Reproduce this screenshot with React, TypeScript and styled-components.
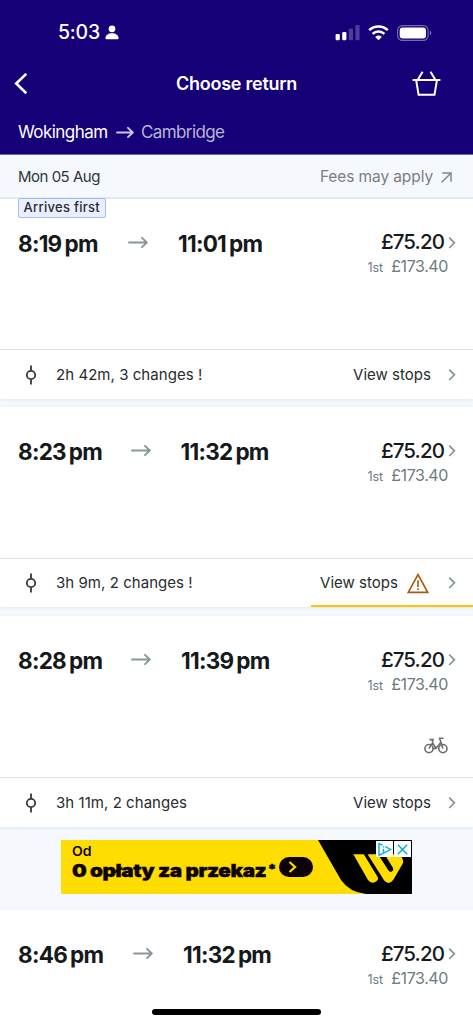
import React from "react";
import styled, { createGlobalStyle } from "styled-components";

const Global = createGlobalStyle`
  *, *::before, *::after { box-sizing: border-box; }
  body { margin: 0; background: #f5f9fd; font-family: Inter, "Liberation Sans", sans-serif; color: #15191b; }
  svg { display: block; flex: none; }
`;

const Screen = styled.main`
  width: 473px;
  height: 1024px;
  overflow: hidden;
  position: relative;
  background: #f5f9fd;
`;

/* Fixed-width run of text, so neighbouring parts keep their place */
const Label = styled.span<{ $w?: number; $size: number; $weight?: number; $track?: number; $color?: string }>`
  display: block;
  flex: none;
  white-space: pre;
  width: ${(p) => (p.$w ? `${p.$w}px` : "auto")};
  font-size: ${(p) => p.$size}px;
  font-weight: ${(p) => p.$weight ?? 400};
  letter-spacing: ${(p) => p.$track ?? 0}px;
  color: ${(p) => p.$color ?? "inherit"};
  line-height: 1.2;
`;

const Header = styled.header`
  height: 154px;
  background: #160078;
  color: #fff;
  display: flex;
  flex-direction: column;
`;

const StatusBar = styled.div`
  height: 56px;
  padding: 9px 41px 0 58px;
  display: flex;
  align-items: center;
`;

const StatusIcons = styled.div`
  display: flex;
  align-items: center;
  margin-left: auto;
  gap: 8px;
`;

const NavBar = styled.div`
  height: 55px;
  padding: 0 32px 0 14px;
  display: grid;
  grid-template-columns: 162px 1fr auto;
  align-items: center;
`;

const RouteBar = styled.div`
  height: 43px;
  padding: 0 18px;
  display: flex;
  align-items: center;
  gap: 7px;
`;

const DateBar = styled.div`
  height: 45px;
  padding: 2px 21px 0 18px;
  border-top: 1px solid #7163ad;
  border-bottom: 2px solid #e7ebee;
  display: flex;
  align-items: center;
  justify-content: space-between;
`;

const Fees = styled.div`
  display: flex;
  align-items: center;
  gap: 8px;
`;

const Card = styled.article<{ $gap?: number }>`
  background: #fff;
  margin-bottom: ${(p) => p.$gap ?? 0}px;
  box-shadow: 0 1px 3px rgba(40, 60, 70, 0.09);
`;

const Journey = styled.div<{ $h: number }>`
  height: ${(p) => p.$h}px;
  padding: 30px 17px 0 18px;
  display: flex;
  justify-content: space-between;
  position: relative;
`;

const Times = styled.div`
  display: flex;
  align-items: center;
  height: 28px;
  gap: 30px;
`;

const Prices = styled.div`
  display: flex;
  flex-direction: column;
  align-items: flex-end;
`;

const PriceRow = styled.div<{ $h: number }>`
  display: flex;
  align-items: center;
  height: ${(p) => p.$h}px;
  gap: 4px;
`;

const FirstClass = styled.div`
  display: flex;
  align-items: baseline;
  gap: 8px;
  padding: 1px 8px 0 0;
`;

const BikeSlot = styled.div`
  position: absolute;
  right: 25px;
  bottom: 23px;
`;

const Badge = styled.span`
  position: absolute;
  left: 17.5px;
  top: -1px;
  width: 88px;
  height: 20px;
  border: 1px solid #a4bdfa;
  border-radius: 2px;
  background: #ebeffd;
  padding: 0 0 0 5px;
  display: flex;
  align-items: center;
`;

const Footer = styled.div<{ $h: number }>`
  height: ${(p) => p.$h}px;
  border-top: 1px solid #dfe2e3;
  padding: 0 17px 0 25px;
  display: flex;
  align-items: center;
  position: relative;
`;

const Stops = styled.div`
  display: flex;
  align-items: center;
  margin-left: auto;
`;

const IconGap = styled.div<{ $l: number; $r: number }>`
  padding: 0 ${(p) => p.$r}px 0 ${(p) => p.$l}px;
`;

const WarningLine = styled.div`
  position: absolute;
  right: 0;
  bottom: 0;
  width: 162px;
  height: 2px;
  background: #ffc20d;
`;

const AdSlot = styled.aside`
  height: 83px;
  padding: 13px 0 0 61px;
`;

const Banner = styled.div`
  width: 351px;
  height: 54px;
  background: #ffdd00;
  display: flex;
  position: relative;
`;

const AdCopy = styled.div`
  width: 218px;
  padding: 4px 0 0 11px;
  color: #0d0208;
`;

/* Extended, extra-heavy cut for the advert's headline */
const Wide = styled.div<{ $x: number; $stroke?: number }>`
  width: max-content;
  transform: scaleX(${(p) => p.$x});
  transform-origin: left center;
  -webkit-text-stroke: ${(p) => p.$stroke ?? 0}px currentColor;
`;

const Asterisk = styled.span`
  font-size: 13px;
  line-height: 0;
  vertical-align: 3px;
  margin-left: 1px;
`;

const AdButton = styled.div`
  width: 34px;
  height: 20px;
  margin-top: 17px;
  border-radius: 10px;
  background: #0d0208;
  display: flex;
  align-items: center;
  padding-left: 9px;
`;

const AdArt = styled.div`
  position: absolute;
  right: 0;
  top: 0;
`;

const AdControls = styled.div`
  position: absolute;
  right: 1px;
  top: 1px;
  display: flex;
  gap: 1px;
`;

const AdControl = styled.div`
  width: 17px;
  height: 16px;
  background: #fff;
  display: grid;
  place-items: center;
`;

const HomeIndicator = styled.div`
  position: absolute;
  left: 152px;
  bottom: 9px;
  width: 169px;
  height: 6px;
  border-radius: 3px;
  background: #000;
`;

const Arrow = ({ w = 20, color = "#89979c" }: { w?: number; color?: string }) => (
  <svg width={w} height="12" viewBox={`0 0 ${w} 12`} fill="none" stroke={color} strokeWidth="1.9" strokeLinecap="round" strokeLinejoin="round">
    <path d={`M1 5.5H${w - 1.5}M${w - 6} .9L${w - 1.2} 5.5L${w - 6} 10.1`} />
  </svg>
);

const Chevron = () => (
  <svg width="8" height="12" viewBox="0 0 8 12" fill="none" stroke="#849397" strokeWidth="1.7">
    <path d="M1.2 .6L6.4 5.8L1.2 11" />
  </svg>
);

const Person = () => (
  <svg width="14" height="15" viewBox="0 0 14 15" fill="#fff">
    <circle cx="7" cy="3.8" r="3.4" />
    <path d="M.4 13.2C.4 10.2 3.2 8.2 7 8.2s6.6 2 6.6 5q0 1.1-1.1 1.1h-11Q.4 14.3.4 13.2Z" />
  </svg>
);

const Signal = () => (
  <svg width="25" height="16" viewBox="0 0 25 16" fill="#fff">
    <rect x=".6" y="9" width="4.2" height="6.2" rx="1.2" />
    <rect x="7.2" y="7" width="4.2" height="8.2" rx="1.2" />
    <rect x="13.8" y="3.4" width="4.2" height="11.8" rx="1.2" opacity=".24" />
    <rect x="20.4" y="0" width="4.2" height="15.2" rx="1.2" opacity=".24" />
  </svg>
);

const Wifi = () => (
  <svg width="21" height="16" viewBox="0 0 21 16" fill="none" stroke="#fff" strokeWidth="2.5">
    <path d="M1.2 5.2C6.4.1 14.6.1 19.8 5.2M4.6 8.9C7.9 5.7 13.1 5.7 16.4 8.9" />
    <path d="M10.5 15.3L7.2 11.9Q10.5 9.3 13.8 11.9Z" fill="#fff" stroke="none" />
  </svg>
);

const Battery = () => (
  <svg width="35" height="16" viewBox="0 0 35 16" fill="none">
    <rect x=".6" y=".6" width="30.5" height="14.8" rx="4.8" stroke="#7468b0" strokeWidth="1.1" />
    <rect x="2.7" y="2.6" width="26.3" height="10.8" rx="3" fill="#fff" />
    <path d="M32.8 5.4Q34.4 6.1 34.4 8T32.8 10.6Z" fill="#7468b0" />
  </svg>
);

const Back = () => (
  <svg width="14" height="22" viewBox="0 0 14 22" fill="none" stroke="#fff" strokeWidth="2.6">
    <path d="M12.3 .8L2.2 10.5L12.3 20.2" />
  </svg>
);

const Basket = () => (
  <svg width="29" height="26" viewBox="0 0 29 26" fill="none" stroke="#fff" strokeWidth="2">
    <path d="M.6 9H28.4M4.2 9.3L6.6 23.8H22.5L24.9 9.3M5.8 8.8L10.6 .7M23.3 8.8L18.5 .7" />
  </svg>
);

const External = () => (
  <svg width="11" height="11" viewBox="0 0 11 11" fill="none" stroke="#7e8b8e" strokeWidth="1.5">
    <path d="M.7 10.3L9.8 1.2M1.2 1H10V9.8" />
  </svg>
);

const StopIcon = () => (
  <svg width="12" height="20" viewBox="0 0 12 20" fill="none" stroke="#34393b" strokeWidth="1.8">
    <circle cx="6" cy="10" r="4.2" />
    <path d="M6 .5V5.8M6 14.2V19.5" />
  </svg>
);

const Warning = () => (
  <svg width="22" height="21" viewBox="0 0 22 21" fill="none" stroke="#a55c12" strokeWidth="1.6">
    <path d="M11 1.5L20.7 19.4H1.3ZM11 7.2V14M11 15.3V16.9" />
  </svg>
);

const Bike = () => (
  <svg width="24" height="17" viewBox="0 0 24 17" fill="none" stroke="#6c6f70" strokeWidth="1.6">
    <circle cx="5" cy="11.6" r="4.1" />
    <circle cx="18.9" cy="11.6" r="4.1" />
    <path d="M5.4 2.6H9.8M5 11.6L8.6 6M8.6 2.6V6L12.2 11.2L16.9 5.2M8.4 11.4H12.2M18.9 11.6L15.6 1.2H19.6" />
  </svg>
);

const UnionMark = () => (
  <svg width="94" height="54" viewBox="0 0 94 54">
    <path d="M0 0H94V54H48Q31 52 23 40Z" fill="#000" />
    <path d="M35.3 14.3H45.8L59.8 37.2Q61 39.5 59 40.8Q53.8 45 50 40Z" fill="#fd0" />
    <path d="M49.6 14.3H60L70.5 30.5Q72.3 32.6 74.2 31.2Q76 29.6 74.8 27.4L66.6 14.3H82L84.8 19.5Q85.8 21.7 84.5 24L75.2 40Q71 45.5 66.2 40.5Z" fill="#fd0" />
  </svg>
);

const AdInfo = () => (
  <svg width="15" height="15" viewBox="0 0 15 15" fill="none" stroke="#00aecd" strokeWidth="1.4">
    <path d="M5.6 3.1L2 1.6V13.4L13.6 7.5L8.2 4.5M6.5 6.8V10.6M6.5 4.2V5.5" />
  </svg>
);

const AdClose = () => (
  <svg width="11" height="11" viewBox="0 0 11 11" fill="none" stroke="#00aecd" strokeWidth="1.4">
    <path d="M.8.8L10.2 10.2M10.2.8L.8 10.2" />
  </svg>
);

type Time = { text: string; w: number };
type TripProps = {
  dep: Time;
  arr: Time;
  height: number;
  gap?: number;
  footer?: number;
  badge?: string;
  bike?: boolean;
  duration?: string;
  warning?: boolean;
};

const Clock = ({ time }: { time: Time }) => {
  const [t, suffix] = time.text.split(" ");
  return (
    <Label $size={22.5} $weight={700} $track={-0.75} $w={time.w}>
      {t}
      {"\u2006"}
      {suffix}
    </Label>
  );
};

const Trip = ({ dep, arr, height, gap, footer = 49, badge, bike, duration, warning }: TripProps) => (
  <Card $gap={gap}>
    <Journey $h={height}>
      {badge && (
        <Badge>
          <Label $size={13} $weight={500} $track={0.28} $color="#262b34">{badge}</Label>
        </Badge>
      )}
      <Times>
        <Clock time={dep} />
        <Arrow />
        <Clock time={arr} />
      </Times>
      <Prices>
        <PriceRow $h={badge ? 27 : 28}>
          <Label $size={20.5} $weight={500} $track={-0.9}>£75.20</Label>
          <Chevron />
        </PriceRow>
        <FirstClass>
          <Label $size={12.5} $color="#6c7b80">1st</Label>
          <Label $size={16} $color="#6c7b80" $track={-0.4}>£173.40</Label>
        </FirstClass>
      </Prices>
      {bike && <BikeSlot><Bike /></BikeSlot>}
    </Journey>
    {duration && (
      <Footer $h={footer}>
        <StopIcon />
        <IconGap $l={19} $r={0}>
          <Label $size={15} $track={0.05} $color="#272c2e">{duration}</Label>
        </IconGap>
        <Stops>
          <Label $size={15} $track={0.03} $w={78} $color="#272c2e">View stops</Label>
          {warning ? <IconGap $l={9} $r={19}><Warning /></IconGap> : <IconGap $l={17} $r={0} />}
          <Chevron />
        </Stops>
        {warning && <WarningLine />}
      </Footer>
    )}
  </Card>
);

export default function App() {
  return (
    <Screen>
      <Global />
      <Header>
        <StatusBar>
          <Label $size={19.5} $weight={500} $track={-0.2} $w={47}>5:03</Label>
          <Person />
          <StatusIcons>
            <Signal />
            <Wifi />
            <Battery />
          </StatusIcons>
        </StatusBar>
        <NavBar>
          <Back />
          <Label $size={18} $weight={600} $track={-0.25}>Choose return</Label>
          <Basket />
        </NavBar>
        <RouteBar>
          <Label $size={17} $w={91} $track={-0.55}>Wokingham</Label>
          <Arrow w={18} color="#cbc8e5" />
          <Label $size={17} $track={-0.6} $color="#b9b4d1">Cambridge</Label>
        </RouteBar>
      </Header>
      <DateBar>
        <Label $size={15} $track={-0.5} $color="#303537">Mon 05 Aug</Label>
        <Fees>
          <Label $size={15.5} $track={-0.1} $color="#7b7e80">Fees may apply</Label>
          <External />
        </Fees>
      </DateBar>
      <Trip dep={{ text: "8:19 pm", w: 80 }} arr={{ text: "11:01 pm", w: 86 }} height={150} footer={50} gap={8} badge="Arrives first" duration="2h 42m, 3 changes !" />
      <Trip dep={{ text: "8:23 pm", w: 82.5 }} arr={{ text: "11:32 pm", w: 88 }} height={151} gap={9} duration="3h 9m, 2 changes !" warning />
      <Trip dep={{ text: "8:28 pm", w: 83 }} arr={{ text: "11:39 pm", w: 89 }} height={161} footer={50} bike duration="3h 11m, 2 changes" />
      <AdSlot>
        <Banner>
          <AdCopy>
            <Wide $x={1.08}>
              <Label $size={13} $weight={600}>Od</Label>
            </Wide>
            <Wide $x={1.15} $stroke={0.4}>
              <Label $size={18} $weight={900} $track={-0.35}>
                0 opłaty za przekaz<Asterisk>*</Asterisk>
              </Label>
            </Wide>
          </AdCopy>
          <AdButton>
            <svg width="10" height="12" viewBox="0 0 10 12" fill="none" stroke="#fd0" strokeWidth="2.2">
              <path d="M1.5 1L7 6L1.5 11" />
            </svg>
          </AdButton>
          <AdArt><UnionMark /></AdArt>
          <AdControls>
            <AdControl><AdInfo /></AdControl>
            <AdControl><AdClose /></AdControl>
          </AdControls>
        </Banner>
      </AdSlot>
      <Trip dep={{ text: "8:46 pm", w: 85 }} arr={{ text: "11:32 pm", w: 88 }} height={114} />
      <HomeIndicator />
    </Screen>
  );
}
